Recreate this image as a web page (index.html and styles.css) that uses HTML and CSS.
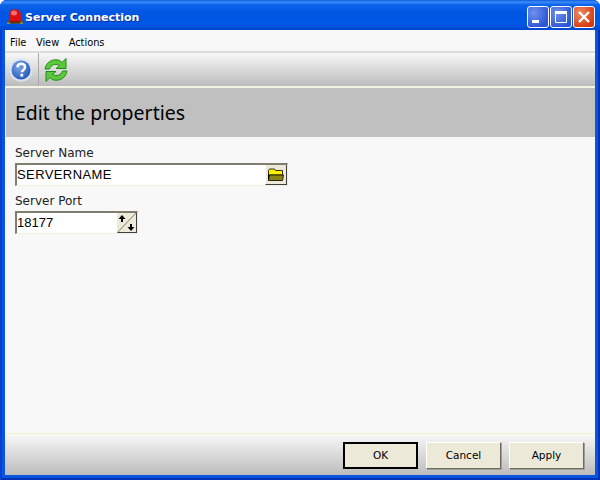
FILE: index.html
```html
<!DOCTYPE html>
<html lang="en">
<head>
<meta charset="utf-8">
<title>Server Connection</title>
<link rel="stylesheet" href="styles.css">
</head>
<body>
<div class="window">
  <header class="titlebar">
    <svg class="app-icon" width="18" height="18" viewBox="0 0 18 18">
      <ellipse cx="9" cy="14.5" rx="8" ry="2.5" fill="#4a5a20"/>
      <path d="M3 14V8a6 6 0 0 1 12 0v6z" fill="#d81010"/>
      <path d="M4 14h10v1.500H4z" fill="#8a1010"/>
      <ellipse cx="8" cy="6" rx="3" ry="2.500" fill="#f87070"/>
      <path d="M1 15.500h3v1.500H1zM14 15.500h3v1.500h-3z" fill="#a08a50"/>
    </svg>
    <span class="title">Server Connection</span>
    <div class="caption-buttons">
      <div class="cap cap-blue">
        <svg width="20" height="20" viewBox="0 0 20 20"><rect x="4" y="13" width="7" height="3" fill="#fff"/></svg>
      </div>
      <div class="cap cap-blue">
        <svg width="20" height="20" viewBox="0 0 20 20"><path d="M4.500 4.500h11v11h-11z" fill="none" stroke="#fff"/><rect x="4" y="4" width="12" height="3" fill="#fff"/></svg>
      </div>
      <div class="cap cap-red">
        <svg width="20" height="20" viewBox="0 0 20 20"><path d="M5 5l10 10M15 5L5 15" stroke="#fff" stroke-width="2.400"/></svg>
      </div>
    </div>
  </header>
  <div class="client">
    <nav class="menubar">
      <span>File</span><span>View</span><span>Actions</span>
    </nav>
    <div class="toolbar">
      <div class="tool tool-help">
        <svg width="24" height="24" viewBox="0 0 24 24">
          <defs>
            <radialGradient id="helpfill" cx="0.4" cy="0.35" r="0.75"><stop offset="0" stop-color="#7aa6ea"/><stop offset="1" stop-color="#1c4fb0"/></radialGradient>
          </defs>
          <circle cx="12" cy="12" r="11.500" fill="#d8e2f4"/>
          <circle cx="12" cy="12" r="9.500" fill="url(#helpfill)"/>
          <path d="M8.500 9.200c0-4.500 7.500-4.500 7.500 0 0 3-3.200 2.800-3.200 5" fill="none" stroke="#fff" stroke-width="2.500"/>
          <rect x="11.400" y="15.800" width="2.800" height="2.800" fill="#fff"/>
        </svg>
      </div>
      <div class="tool tool-refresh">
        <svg width="26" height="26" viewBox="0 0 26 26">
          <path d="M2 12C3 5 10 1 17 3.500L19 5.500 23 1.500V11.500H13L16.500 8.500C12 6 8 8 6.500 12z" fill="#5cc83c" stroke="#1e8c14"/>
          <path d="M24 14C23 21 16 25 9 22.500L7 20.500 3 24.500V14.500H13L9.500 17.500C14 20 18 18 19.500 14z" fill="#5cc83c" stroke="#1e8c14"/>
        </svg>
      </div>
    </div>
    <div class="banner">Edit the properties</div>
    <main class="form">
      <label class="field-label">Server Name</label>
      <div class="input input-name">
        <span class="value value-name">SERVERNAME</span>
        <div class="browse">
          <svg width="16" height="13" viewBox="0 0 16 13">
            <path d="M0.500 12V2.500l1-1.500h5l1 1.500h7V7H0.500z" fill="#fff000" stroke="#000" stroke-width="0.800"/>
            <path d="M0.500 12.500l1-5.500h14l-1 5.500z" fill="#8a8414" stroke="#000" stroke-width="0.800"/>
          </svg>
        </div>
      </div>
      <label class="field-label">Server Port</label>
      <div class="input input-port">
        <span class="value">18177</span>
        <div class="spin">
          <svg width="19" height="20" viewBox="0 0 19 20">
            <path d="M0 20L19 0" stroke="#807c70"/>
            <path d="M5 2l3.500 4H6v3H4V6H1.500z" fill="#000"/>
            <path d="M13 11h2v3h2.500L14 18l-3.500-4H13z" fill="#000"/>
          </svg>
        </div>
      </div>
    </main>
    <footer class="footer">
      <button class="btn btn-default">OK</button>
      <button class="btn">Cancel</button>
      <button class="btn">Apply</button>
    </footer>
  </div>
</div>
</body>
</html>
```
FILE: styles.css
```css
html, body {
  margin: 0;
  padding: 0;
}
body {
  width: 600px;
  height: 480px;
  overflow: hidden;
  font-family: "Liberation Sans", Arial, sans-serif;
}
.window {
  width: 600px;
  height: 480px;
  box-sizing: border-box;
  display: flex;
  flex-direction: column;
  background: #0a55e0;
  padding: 0 5px 5px 5px;
  border-radius: 7px 7px 0 0;
  box-shadow: inset 2px 0 0 #0a3fd0, inset -2px 0 0 #0032b8, inset 0 -2px 0 #0032b8;
}
.titlebar {
  height: 30px;
  flex: none;
  margin: 0 -5px;
  padding: 0 5px 0 6px;
  display: flex;
  align-items: center;
  border-radius: 7px 7px 0 0;
  background: linear-gradient(#0a5ae0 0, #3c8cf8 2px, #0a62ea 5px, #0054e0 14px, #0058e8 24px, #0046cc 30px);
}
.app-icon {
  flex: none;
  margin-top: 2px;
}
.title {
  margin-left: 1px;
  margin-top: 4px;
  color: #fff;
  font-family: "DejaVu Sans", sans-serif;
  font-weight: 700;
  font-size: 11px;
  text-shadow: 1px 1px 0 #0a2f9a;
  flex: 1;
}
.caption-buttons {
  display: flex;
  gap: 1px;
  margin-top: 3px;
}
.cap {
  width: 20px;
  height: 20px;
  border: 1px solid #fff;
  border-radius: 3px;
  overflow: hidden;
}
.cap svg { display: block; }
.cap-blue {
  background: radial-gradient(circle at 30% 30%, #6e92ec, #2c55d8 75%);
}
.cap-red {
  background: radial-gradient(circle at 30% 30%, #ec8a68, #d63c10 75%);
}
.client {
  flex: 1;
  min-height: 0;
  display: flex;
  flex-direction: column;
  background: #f8f8f8;
}
.menubar {
  height: 23px;
  flex: none;
  box-sizing: border-box;
  display: flex;
  align-items: center;
  gap: 9.500px;
  padding: 4px 0 0 5px;
  background: #f8f8f8;
  border-bottom: 2px solid #dcdcdc;
  font-family: "DejaVu Sans", sans-serif;
  font-size: 9.800px;
  color: #000;
}
.toolbar {
  height: 33px;
  flex: none;
  display: flex;
  background: linear-gradient(#f8f8f8, #bcbcbc);
  border-bottom: 2px solid #f4f4e4;
}
.tool {
  display: flex;
  align-items: center;
  box-sizing: border-box;
  height: 100%;
}
.tool-help {
  width: 34px;
  padding-left: 4px;
  border-right: 1px solid #a8a8a8;
}
.tool-refresh {
  padding-left: 4px;
}
.banner {
  height: 49px;
  flex: none;
  box-sizing: border-box;
  padding: 0 0 0 9px;
  display: flex;
  align-items: center;
  background: #c0c0c0;
  border-left: 1px solid #f4f4e4;
  font-family: "Noto Sans", sans-serif;
  font-size: 19.500px;
  color: #000;
}
.form {
  flex: 1;
  padding: 8px 10px 0;
  display: flex;
  flex-direction: column;
  align-items: flex-start;
}
.field-label {
  font-family: "DejaVu Sans", sans-serif;
  font-size: 12px;
  color: #222;
  height: 18px;
  line-height: 16px;
}
.input {
  box-sizing: border-box;
  height: 23px;
  display: flex;
  align-items: stretch;
  background: #fff;
  border-top: 2px solid #807c70;
  border-left: 2px solid #807c70;
  border-right: 1px solid #f0eee0;
  border-bottom: 1px solid #f0eee0;
  margin-bottom: 7px;
}
.input-name { width: 273px; }
.input-port { width: 123px; }
.value {
  flex: 1;
  font-family: "Liberation Sans", sans-serif;
  font-size: 13px;
  line-height: 20px;
}
.value-name {
  letter-spacing: 0.400px;
}
.browse {
  width: 20px;
  background: #ece9d8;
  border-right: 1px solid #404040;
  border-bottom: 1px solid #404040;
  border-left: 1px solid #fff;
  display: flex;
  align-items: center;
  justify-content: center;
}
.spin {
  width: 19px;
  background: #ece9d8;
  border-right: 1px solid #404040;
  border-bottom: 1px solid #404040;
}
.spin svg { display: block; }
.footer {
  height: 42px;
  flex: none;
  box-sizing: border-box;
  display: flex;
  justify-content: flex-end;
  align-items: center;
  gap: 8px;
  padding: 2px 11px 0 0;
  background: linear-gradient(#f8f8f8, #bcbcbc);
  border-top: 1px solid #f0eecc;
}
.btn {
  width: 75px;
  height: 27px;
  box-sizing: border-box;
  padding: 0 0 2px;
  background: #ece9d8;
  border: 1px solid;
  border-color: #fff #6e6c60 #6e6c60 #fff;
  box-shadow: 1px 1px 0 #a09e90;
  font-family: "DejaVu Sans", sans-serif;
  font-size: 10.500px;
  color: #000;
}
.btn-default {
  border: 2px solid #000;
  box-shadow: none;
}
```
